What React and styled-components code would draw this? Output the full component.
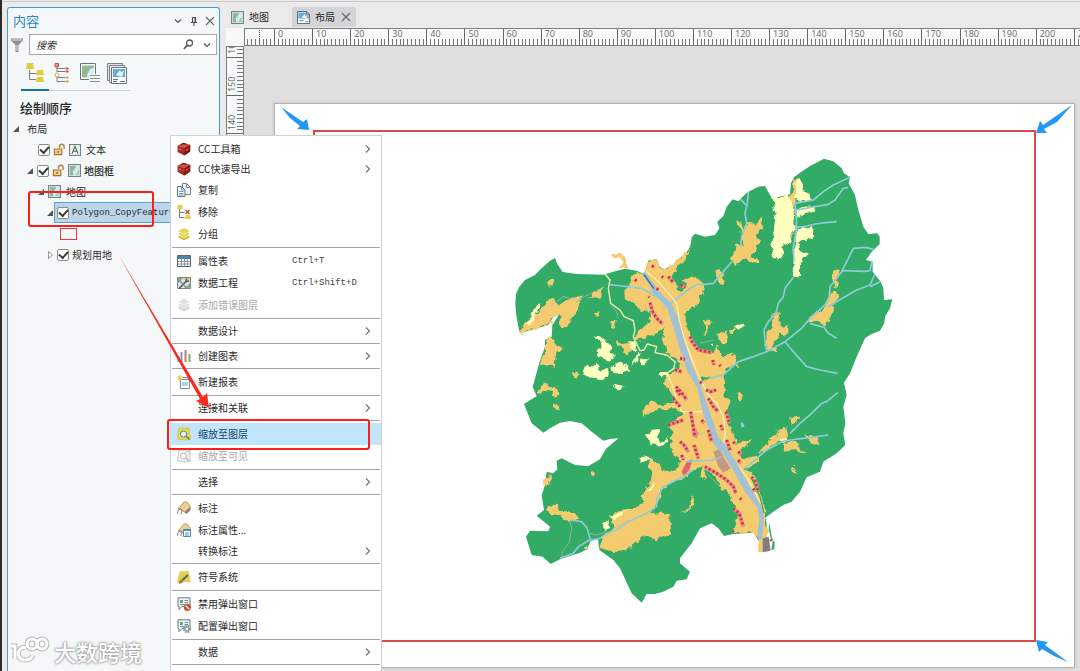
import React, { useEffect, useState } from 'react';
import styled, { createGlobalStyle } from 'styled-components';

const GlobalStyle = createGlobalStyle`
  * {
    box-sizing: border-box;
  }

  body {
    margin: 0;
    background: #eaeaea;
    color: #2a2a2a;
    font-family: 'Noto Sans CJK SC', sans-serif;
    font-size: 10px;
  }

  button, input {
    margin: 0;
    padding: 0;
    border: 0;
    background: none;
    color: inherit;
    font: inherit;
  }

  svg {
    display: block;
    flex: none;
  }
`;

const Shell = styled.div`
  position: relative;
  display: flex;
  flex-direction: column;
  min-height: 100vh;
  overflow: hidden;
  border-left: 2px solid #2d2a2c;
`;

const TopEdge = styled.div`
  height: 2px;
  border-bottom: 1px solid #c8cace;
`;

const Workspace = styled.div`
  flex: 1;
  display: flex;
  gap: 6px;
  padding-left: 5px;
`;

/* ---------- contents panel ---------- */

const Panel = styled.aside`
  flex: none;
  width: 213px;
  margin-top: 5px;
  border: 1px solid #4a98d0;
  border-bottom: 0;
  border-radius: 3px 3px 0 0;
  background: #f5f8f8;
`;

const PanelHeader = styled.header`
  display: flex;
  align-items: center;
  gap: 5px;
  height: 26px;
  padding: 0 4px 0 5px;
`;

const PanelTitle = styled.h1`
  flex: 1;
  margin: 0;
  color: #2a86c8;
  font-size: 13px;
  font-weight: 400;
  line-height: 26px;
`;

const IconButton = styled.button`
  display: flex;
  align-items: center;
  justify-content: center;
  width: 11px;
  height: 16px;
`;

const SearchRow = styled.form`
  display: flex;
  align-items: center;
  gap: 5px;
  padding: 0 2px;
`;

const SearchBox = styled.div`
  flex: 1;
  display: flex;
  align-items: center;
  gap: 7px;
  height: 21px;
  padding: 0 4px 0 6px;
  border: 1px solid #a5a7a8;
  background: #fff;
`;

const SearchInput = styled.input`
  flex: 1;
  min-width: 0;
  outline: 0;
  font-style: italic;

  &::placeholder {
    color: #333;
    opacity: 1;
  }
`;

const ViewBar = styled.div`
  display: flex;
  align-items: center;
  width: 110px;
  height: 36px;
  margin: 0 0 0 13px;
  border-bottom: 1px solid #cdd0d1;
`;

const ViewButton = styled.button`
  display: flex;
  align-items: center;
  justify-content: center;
  width: 28px;
  height: 36px;
  padding-top: 3px;
  border-bottom: 2px solid ${(p) => (p.$active ? '#1272b4' : 'transparent')};
`;

const SectionTitle = styled.h2`
  margin: 6px 0 0 12px;
  font-size: 13px;
  font-weight: 500;
  line-height: 21px;
`;

const Tree = styled.ul`
  margin: 0;
  padding: 0;
  list-style: none;
`;

const TreeRow = styled.li`
  display: flex;
  align-items: center;
  gap: 3px;
  height: 21px;
  padding-left: ${(p) => p.$indent}px;
  white-space: nowrap;
`;

const Expander = styled.button`
  display: flex;
  align-items: center;
  justify-content: center;
  width: 8px;
  height: 12px;
`;

const Selectable = styled.span`
  flex: 1;
  display: flex;
  align-items: center;
  gap: 3px;
  min-width: 0;
  height: 21px;
  margin-left: -3px;
  padding-left: 2px;
  border: 1px solid ${(p) => (p.$selected ? '#5b9fd3' : 'transparent')};
  background: ${(p) => (p.$selected ? '#bdd5e9' : 'none')};
`;

const Check = styled.input.attrs({ type: 'checkbox', defaultChecked: true })`
  appearance: none;
  flex: none;
  display: grid;
  place-items: center;
  width: 12px;
  height: 12px;
  border: 1px solid #8b8b8b;
  border-radius: 2px;
  background: #fff;

  &:checked::before {
    content: '';
    width: 7px;
    height: 4px;
    border: solid #3a3a3a;
    border-width: 0 0 2px 2px;
    transform: translateY(-1px) rotate(-48deg);
  }
`;

const RowLabel = styled.label`
  padding-left: ${(p) => (p.$spaced ? 2 : 0)}px;
  font-family: ${(p) => (p.$latin ? "'Liberation Mono', monospace" : 'inherit')};
  font-size: ${(p) => (p.$latin ? 9 : 10)}px;
  font-weight: ${(p) => (p.$bold ? 500 : 400)};
  line-height: 20px;
`;

const Swatch = styled.span`
  width: 17px;
  height: 12px;
  border: 1px solid #f0383c;
`;

/* ---------- document area ---------- */

const Documents = styled.main`
  flex: 1;
  min-width: 0;
  display: flex;
  flex-direction: column;
`;

const TabBar = styled.div`
  display: flex;
  gap: 18px;
  height: 26px;
  padding: 5px 0 1px;
`;

const Tab = styled.div`
  display: flex;
  align-items: center;
  gap: 5px;
  padding: 0 5px;
  border-radius: 3px 3px 0 0;
  background: ${(p) => (p.$active ? '#d2d4d7' : 'none')};
`;

const TabButton = styled.button`
  display: flex;
  align-items: center;
  gap: 5px;
  line-height: 20px;
`;

const RulerRow = styled.div`
  display: flex;
  height: 18px;
`;

const RulerCorner = styled.div`
  flex: none;
  width: 18px;
  background: #f7f9f9;
`;

const TopRuler = styled.svg`
  flex: 1;
  min-width: 0;
  width: 0;
  height: 18px;
  background: #fafcfc;
`;

const SideRuler = styled.svg`
  align-self: stretch;
  width: 18px;
  background: #f7fafa;
`;

const RulerText = styled.text`
  fill: #666;
  font-family: 'Open Sans', sans-serif;
  font-size: 9px;
`;

const Stage = styled.div`
  flex: 1;
  display: flex;
`;

const Canvas = styled.div`
  flex: 1;
  display: flex;
  padding: 57px 5px 4px 30px;
  background: #dfdfde;
`;

const Sheet = styled.div`
  flex: 1;
  display: flex;
  padding: 26px 38px 25px;
  border: 1px solid #b4b4b6;
  background: #fff;
  box-shadow: 0 0 3px #bcbcc0;
`;

const MapFrame = styled.div`
  position: relative;
  flex: 1;
  display: flex;
  border: 2px solid #d94a50;
`;

const MapDrawing = styled.svg`
  flex: 1;
  min-width: 0;
  width: 0;
  height: auto;
`;

const CornerArrow = styled.svg`
  position: absolute;
  top: ${(p) => p.$top};
  left: ${(p) => p.$left};
`;

/* ---------- context menu ---------- */

const Menu = styled.div`
  position: absolute;
  top: 135px;
  bottom: 0;
  left: 168px;
  width: 212px;
  padding-top: 3px;
  border: 1px solid #d0d2d3;
  border-bottom: 0;
  background: #fff;
`;

const MenuItem = styled.button`
  display: grid;
  grid-template-columns: 14px 87px 1fr 8px;
  align-items: center;
  gap: 7px;
  width: 100%;
  height: ${(p) => (p.$submenu ? 20 : 22)}px;
  padding: 0 9px 0 6px;
  background: ${(p) => (p.$highlight ? '#c1e5fa' : 'none')};
  color: ${(p) => (p.$highlight ? '#14466c' : 'inherit')};
  line-height: 20px;
  text-align: left;
  white-space: nowrap;

  &:disabled {
    color: #a9a9a9;
  }
`;

const Shortcut = styled.span`
  color: #444;
  font-family: 'Liberation Mono', monospace;
  font-size: 9px;
`;

const Divider = styled.hr`
  height: 1px;
  margin: 2px 1px;
  border: 0;
  background: #a3a3a3;
`;

/* ---------- overlays ---------- */

const Callout = styled.div`
  position: absolute;
  top: ${(p) => p.$top}px;
  left: ${(p) => p.$left}px;
  width: ${(p) => p.$width}px;
  height: ${(p) => p.$height}px;
  border: 2px solid #fa1f1a;
  border-radius: 3px;
  pointer-events: none;
`;

const Pointer = styled.svg`
  position: absolute;
  top: 250px;
  left: 113px;
  pointer-events: none;
`;

const Watermark = styled.div`
  position: absolute;
  bottom: 6px;
  left: 6px;
  display: flex;
  align-items: center;
  gap: 4px;
  color: #fff;
  font-size: 22px;
  font-weight: 500;
  line-height: 30px;
  text-shadow: 0 0 2px #999, 0 0 2px #999, 0 0 3px #aaa;
`;

/* ---------- icons ---------- */

const Icon = ({ size = 14, children }) => (
  <svg width={size} height={size} viewBox="0 0 14 14" fill="none" aria-hidden="true">
    {children}
  </svg>
);

const Chevron = ({ right }) => (
  <svg width="8" height="10" viewBox="0 0 8 10" fill="none" stroke={right ? '#777' : '#555'} aria-hidden="true">
    <path d={right ? 'M2 1.5 5.5 5 2 8.5' : 'M1 3.5 4 6.5 7 3.5'} strokeWidth="1.2" />
  </svg>
);

const CloseGlyph = () => (
  <svg width="10" height="10" viewBox="0 0 10 10" stroke="#666" strokeWidth="1.1" aria-hidden="true">
    <path d="M1 1 9 9M9 1 1 9" />
  </svg>
);

const ToolboxIcon = () => (
  <Icon>
    <path d="M0.5 4 6 .8 13.3 3 13.2 9.5 7.3 13.4.6 10z" fill="#a8271f" />
    <path d="M.5 4 6 .8 13.3 3 7.5 6.3z" fill="#cf5347" />
    <path d="M7.4 6.4v7l5.8-3.9V3z" fill="#7c1714" />
    <path d="M4 3.3C5 1 9 1.2 9.5 3.2" stroke="#441411" />
    <path d="M.7 6.5 7.3 9l5.8-3.4" stroke="#c9584c" strokeWidth=".6" />
    <path d="M3 6.6v1.5M10 7v1.5" stroke="#ddd" strokeWidth=".8" />
  </Icon>
);

const CopyIcon = () => (
  <Icon>
    <path d="M5.5 .5h4l4 4v7h-8z" fill="#eef4f8" stroke="#78838b" />
    <path d="M9.5 .5v4h4" stroke="#78838b" />
    <path d="M.5 3.5h4l3.500 3.500v6.500H.5z" fill="#f3f9fd" stroke="#5c7484" />
    <path d="M4.500 3.500v3.500H8M2 8.500h4.500M2 10.500h4.500M2 12h4.500" stroke="#4f9ccd" strokeWidth=".9" />
  </Icon>
);

const RemoveIcon = () => (
  <Icon>
    <path d="M1 0h4l1 4H0zM9 10h4l1 4H8z" fill="#e2cd3e" />
    <path d="M2.5 4v8.5h5M2.5 7.5h5" stroke="#7c8387" />
    <path d="m8.5 5 4 4M12.5 5l-4 4" stroke="#d6452b" strokeWidth="1.5" />
  </Icon>
);

const LayersIcon = ({ muted }) => (
  <Icon>
    <path d="M7 6.6 13.6 10 7 13.5.4 10z" fill={muted ? '#d6d6d6' : '#d5c139'} />
    <path d="M7 3.6 13.6 7 7 10.5.4 7z" fill={muted ? '#dedede' : '#e1cd45'} stroke="#fff" strokeWidth=".7" />
    <path d="M7 .6 13.6 4 7 7.5.4 4z" fill={muted ? '#e2e2e2' : '#e7d552'} stroke="#fff" strokeWidth=".7" />
  </Icon>
);

const TableIcon = () => (
  <Icon>
    <path d="M.5 1.5h13v11H.5z" fill="#fff" stroke="#5d666c" />
    <path d="M1 2h12v3H1z" fill="#3b85bd" />
    <path d="M1 7.5h12M1 10h12M4.5 2v10M7.5 2v10M10.5 2v10" stroke="#77818a" strokeWidth=".8" />
  </Icon>
);

const EngineeringIcon = () => (
  <Icon>
    <path d="M.5 1.5h13v11H.5z" fill="#d3e2ec" stroke="#7d8589" />
    <path d="M1 2h5L1 7zM8 12l5-5v5z" fill="#7fb27e" />
    <path d="m6 2 7 3V2z" fill="#e9cf4e" />
    <path d="m2 12.500 7-7M9 5.500l.5-3M9 5.500l3-.5" stroke="#555b60" strokeWidth="1.600" />
    <path d="m2 4 7.500 8" stroke="#858b8f" strokeWidth="1.300" />
  </Icon>
);

const ChartIcon = () => (
  <Icon>
    <path d="M1.5 7v6M4.5 3v10" stroke="#6ba6cf" strokeWidth="2" />
    <path d="M8.5 1v12" stroke="#d6735f" strokeWidth="2" />
    <path d="M12.5 5v8" stroke="#85a86d" strokeWidth="2" />
  </Icon>
);

const ReportIcon = () => (
  <Icon>
    <path d="M3.5 4.5h9v9h-9z" fill="#fff" stroke="#7c858b" />
    <path d="M5 7h6v4H5z" fill="#a8d1e9" />
    <path d="M6 2.5h5v2" stroke="#7c858b" />
    <path d="M3 0v6M0 3h6M1 1l4 4M5 1 1 5" stroke="#e1c43b" />
  </Icon>
);

const ZoomLayerIcon = ({ muted }) => (
  <Icon>
    <path d="M2 1h10l1.5 11-5 1L.5 12z" fill={muted ? '#f4f4f4' : '#e8d356'} stroke={muted ? '#c8c8c8' : '#d9c54a'} />
    <circle cx="6.5" cy="7" r="3" fill={muted ? '#fff' : '#e7f3fa'} stroke={muted ? '#bdbdbd' : '#4f84a8'} />
    <path d="m9 9 3.5 3.5" stroke={muted ? '#bdbdbd' : '#4f84a8'} strokeWidth="1.6" />
    {muted && <path d="m8 4 5-3v5" stroke="#c4c4c4" />}
  </Icon>
);

const LabelIcon = ({ form }) => (
  <Icon>
    <path d="M4 8.5 9.5 13 13.6 9V5.8L8 10z" fill="#8e8174" />
    <path d="M1.5 7.5 7 1h3l3.5 4.5L8 11z" fill="#ecce94" stroke="#a58d62" strokeWidth=".8" />
    <path d="M.5 12.5C.5 9 3 6.5 4.5 8.5S2.5 13 4.5 13" stroke="#7e7364" />
    {form && (
      <>
        <path d="M6.5 6.5h7v7h-7z" fill="#fff" stroke="#4f86ac" />
        <path d="M6.5 7.5h7M8 10h4M8 12h4" stroke="#4f94c4" />
      </>
    )}
  </Icon>
);

const SymbologyIcon = () => (
  <Icon>
    <path d="M2.5 1.500C5 .5 8 2 11.500 .5L13.700 12C11 13 8 11 4.500 13L0 12.500z" fill="#e5d04a" />
    <path d="m5 10.500 6-5.500" stroke="#5c6a73" strokeWidth="2" />
    <path d="M2 13.500c0-2 1.500-4 3-3S4.500 13.500 2 13.500" fill="#b9552e" />
  </Icon>
);

const PopupIcon = ({ gear }) => (
  <Icon>
    <path d="M1 .8h12v8.700H5L2 12.500V9.500H1z" fill="#f4f8fa" stroke="#6c757b" />
    <path d="M3 3h3v3H3z" fill="#69ab76" />
    <path d="M7.500 3.500H11M7.500 5.500H11M3 7.500h5" stroke="#4f94c4" />
    {gear ? (
      <>
        <circle cx="10" cy="10" r="3" fill="#fff" stroke="#8a8f92" strokeWidth="2" strokeDasharray="1.600 .8" />
        <circle cx="10" cy="10" r="2" stroke="#8a8f92" />
      </>
    ) : (
      <>
        <circle cx="10.300" cy="10.300" r="3.600" fill="#d14e2c" />
        <path d="m8.500 8.500 3.600 3.600" stroke="#fff" strokeWidth="1.200" />
      </>
    )}
  </Icon>
);

const MapIcon = () => (
  <Icon size={13}>
    <path d="M.6.6h12.800v12.800H.6z" fill="#d5ecf5" stroke="#7b8083" strokeWidth="1.200" />
    <path d="M2 2h7L7 6 5 8l1 4H2z" fill="#8dba91" />
    <path d="M12 12H8l2-4 2-2z" fill="#a9cfaa" />
  </Icon>
);

const LayoutIcon = () => (
  <Icon size={13}>
    <path d="M.6.6h9.400l3.400 3.400v9.400H.6z" fill="#fff" stroke="#657077" strokeWidth="1.200" />
    <path d="M1.500 1.500h8v3h3V8h-11z" fill="#64ade0" />
    <path d="M5 7 8 3.500 9 5l2-.500L10 8z" fill="#e6f4fc" />
    <path d="M2.500 10.500H7M9 11.500h3" stroke="#3f86b8" />
    <path d="M10 .6V4h3.400" stroke="#657077" />
  </Icon>
);

const LockIcon = () => (
  <Icon size={13}>
    <path d="M1.500 6.500h8v6h-8z" fill="#f0cf97" stroke="#a8702e" strokeWidth="1.200" />
    <path d="M7 6V4c0-3.500 5-3.500 5 0v2.500" stroke="#b98442" strokeWidth="1.500" />
    <path d="M5.500 8.500v2" stroke="#70451b" strokeWidth="1.400" />
  </Icon>
);

const TextFrameIcon = () => (
  <Icon size={12}>
    <path d="M.6.6h12.800v12.800H.6z" fill="#e8f0eb" stroke="#777d7f" strokeWidth="1.200" />
    <path d="m3.500 11.500 3.500-9 3.500 9M4.800 8.500h4.400" stroke="#4b5e55" strokeWidth="1.200" />
  </Icon>
);

const DrawOrderIcon = () => (
  <svg width="20" height="20" viewBox="0 0 20 20" fill="none" aria-hidden="true">
    <path d="M2 0h6l1 6H1zM12 7h6l1 5h-8zM12 14h6l1 5h-8z" fill="#e2cd3c" />
    <path d="M4.500 7v9.500H11M4.500 10.500H11" stroke="#7c8489" />
  </svg>
);

const SourceIcon = () => (
  <svg width="16" height="20" viewBox="0 0 16 20" fill="none" aria-hidden="true">
    <path d="M1 .5h3.500V4H1z" fill="#e89a80" stroke="#cd5236" />
    <path d="M3 4v5M3 8.500h8M3 5.500h8M3 14v4.500h8M3 14.500h8" stroke="#777e83" />
    <path d="M11.500 5.500h3M11.500 8.500h3" stroke="#cd5236" strokeWidth="2" />
    <circle cx="3" cy="12" r="2" fill="#fff" stroke="#d6a041" />
    <path d="M11.500 14.500h3M11.500 18.500h3" stroke="#d6a041" strokeWidth="2" />
  </svg>
);

const SelectionIcon = () => (
  <svg width="21" height="20" viewBox="0 0 21 20" fill="none" aria-hidden="true">
    <path d="M1.500 .5h15v16h-15z" fill="#fff" stroke="#6d7377" />
    <path d="M3 2.500h12v12H3z" fill="#8dba92" />
    <path d="m8 12 3-6 4-1.500v10H8z" fill="#d8eff8" />
    <path d="M10 11h11v9H10z" fill="#f5f8f8" />
    <path d="M11 12.500h10M11 15.500h10M11 18.500h10" stroke="#858b8e" />
  </svg>
);

const MapSeriesIcon = () => (
  <svg width="21" height="21" viewBox="0 0 21 21" fill="none" aria-hidden="true">
    <path d="M.5.5h15v17H.500z" fill="#dde2e5" stroke="#7c8488" />
    <path d="M2.500 2.500h15v17h-15z" fill="#e8edf0" stroke="#7c8488" />
    <path d="M4.500 4.500h15v16h-15z" fill="#fff" stroke="#69737a" />
    <path d="M6 6h12v8H6z" fill="#63ace0" />
    <path d="m9 12 4-5 1 2 3-1-2 6z" fill="#e6f4fc" />
    <path d="M6 16.500h5M6 18.500h4M13 18.500h5" stroke="#5a7689" />
  </svg>
);

/* ---------- menu data ---------- */

const menuGroups = [
  [
    { label: 'CC工具箱', icon: <ToolboxIcon />, submenu: true },
    { label: 'CC快速导出', icon: <ToolboxIcon />, submenu: true },
    { label: '复制', icon: <CopyIcon /> },
    { label: '移除', icon: <RemoveIcon /> },
    { label: '分组', icon: <LayersIcon /> },
  ],
  [
    { label: '属性表', icon: <TableIcon />, shortcut: 'Ctrl+T' },
    { label: '数据工程', icon: <EngineeringIcon />, shortcut: 'Ctrl+Shift+D' },
    { label: '添加错误图层', icon: <LayersIcon muted />, disabled: true },
  ],
  [{ label: '数据设计', submenu: true }],
  [{ label: '创建图表', icon: <ChartIcon />, submenu: true }],
  [{ label: '新建报表', icon: <ReportIcon /> }],
  [{ label: '连接和关联', submenu: true }],
  [
    { label: '缩放至图层', icon: <ZoomLayerIcon />, highlight: true },
    { label: '缩放至可见', icon: <ZoomLayerIcon muted />, disabled: true },
  ],
  [{ label: '选择', submenu: true }],
  [
    { label: '标注', icon: <LabelIcon /> },
    { label: '标注属性...', icon: <LabelIcon form /> },
    { label: '转换标注', submenu: true },
  ],
  [{ label: '符号系统', icon: <SymbologyIcon /> }],
  [
    { label: '禁用弹出窗口', icon: <PopupIcon /> },
    { label: '配置弹出窗口', icon: <PopupIcon gear /> },
  ],
  [{ label: '数据', submenu: true }],
];

const ContextMenu = () => (
  <Menu role="menu">
    {menuGroups.map((group) => (
      <React.Fragment key={group[0].label}>
        {group.map((item) => (
          <MenuItem
            key={item.label}
            type="button"
            role="menuitem"
            disabled={item.disabled}
            $submenu={item.submenu}
            $highlight={item.highlight}
          >
            <span>{item.icon}</span>
            <span>{item.label}</span>
            <Shortcut>{item.shortcut}</Shortcut>
            {item.submenu && <Chevron right />}
          </MenuItem>
        ))}
        <Divider />
      </React.Fragment>
    ))}
  </Menu>
);

/* ---------- rulers ---------- */

const STEP = 38.085;

const useWindowWidth = () => {
  const [width, setWidth] = useState(window.innerWidth);
  useEffect(() => {
    const onResize = () => setWidth(window.innerWidth);
    window.addEventListener('resize', onResize);
    return () => window.removeEventListener('resize', onResize);
  }, []);
  return width;
};

const HorizontalRuler = () => {
  const count = Math.ceil((useWindowWidth() - 274) / STEP);
  const majors = Array.from({ length: count }, (_, i) => i);
  const minors = Array.from({ length: count * 10 + 8 }, (_, i) => i - 8);
  return (
    <TopRuler shapeRendering="crispEdges">
      {minors.map((i) => (
        <path key={i} d={`M${30.5 + (i * STEP) / 10} 11v6`} stroke="#777" />
      ))}
      <path d="M15 2v14" stroke="#555" strokeDasharray="1 1" />
      {majors.map((i) => (
        <g key={i}>
          <path d={`M${30.5 + i * STEP} 0v18`} stroke="#666" />
          <RulerText x={34 + i * STEP} y="9">{i * 10}</RulerText>
        </g>
      ))}
      <path d="M0 .5h3000M0 17.500h3000M.5 0v18" stroke="#7d7d7d" />
    </TopRuler>
  );
};

const VerticalRuler = () => {
  const majors = Array.from({ length: 17 }, (_, i) => i);
  const minors = Array.from({ length: 170 }, (_, i) => i - 3);
  return (
    <SideRuler shapeRendering="crispEdges">
      {minors.map((i) => (
        <path key={i} d={`M11 ${11.5 + (i * STEP) / 10}h6`} stroke="#777" />
      ))}
      {majors.map((i) => (
        <g key={i}>
          <path d={`M0 ${11.5 + i * STEP}h18`} stroke="#666" />
          <RulerText transform={`translate(9 ${8 + i * STEP}) rotate(-90)`}>{160 - i * 10}</RulerText>
        </g>
      ))}
      <path d="M.5 0v3000M17.500 0v3000M0 .5h18" stroke="#7d7d7d" />
    </SideRuler>
  );
};

/* ---------- land use map ---------- */

const GREEN = '#32ab67';
const GOLD = '#f5cb70';
const PALE = '#ffffbe';
const STREAM = '#8fcbd8';

const outline =
  'M46 490 48 462 58 440 75 420 105 405 125 385 150 362 165 354 172 372 188 396 230 402 310 404 345 394 375 386 410 392 432 402 438 385 445 362 470 357 478 380 492 388 520 376 545 350 565 330 572 312 575 292 585 281 615 290 645 285 658 265 652 245 670 228 680 200 698 178 715 184 740 158 775 140 795 138 810 165 818 175 870 163 873 130 882 112 900 98 930 78 955 65 972 56 1000 64 1025 85 1032 100 1050 112 1046 130 1065 165 1075 210 1090 260 1105 282 1132 280 1139 290 1139 312 1115 335 1098 360 1118 365 1118 395 1142 425 1150 445 1152 480 1177 478 1170 505 1155 530 1153 550 1140 572 1115 582 1095 595 1070 650 1050 700 1032 728 1040 765 1030 800 1036 850 1030 880 1036 915 1010 940 970 965 960 995 920 1012 900 1055 875 1085 850 1095 820 1115 798 1132 802 1180 778 1205 760 1178 700 1182 672 1188 655 1165 635 1150 600 1165 575 1210 540 1255 540 1270 570 1295 560 1318 530 1322 520 1340 490 1355 465 1362 440 1362 425 1388 395 1360 360 1285 340 1260 298 1230 294 1198 272 1202 262 1228 240 1238 180 1258 152 1272 128 1250 95 1245 78 1190 90 1172 145 1174 150 1160 110 1127 132 1110 125 1065 135 1035 140 995 160 1000 172 988 170 962 185 955 225 975 265 978 300 958 318 926 335 912 355 895 330 897 310 902 275 875 245 850 210 843 180 848 150 865 130 878 95 850 72 792 110 768 98 742 112 690 118 668 135 620 135 600 155 590 157 555 178 523 160 530 145 555 60 580 55 560 48 520z';

const town =
  'M432 402 412 398 398 405 392 430 370 455 372 478 400 488 425 515 455 510 445 543 415 570 408 600 440 592 470 582 497 560 485 600 500 620 497 640 530 650 545 675 520 692 488 725 505 750 525 785 485 792 455 784 430 805 432 827 470 808 530 808 548 825 500 855 520 880 510 920 525 950 545 965 520 995 495 992 470 965 445 955 455 1010 430 1060 425 1095 395 1110 370 1105 330 1130 345 1165 305 1195 298 1230 340 1236 380 1228 420 1200 435 1185 470 1198 510 1185 508 1130 485 1115 450 1120 475 1085 490 1045 540 1020 560 1010 580 985 610 980 645 1010 655 1035 690 1060 700 1090 715 1120 700 1178 760 1178 780 1200 775 1237 810 1237 805 1190 795 1135 785 1070 765 1010 735 985 778 965 772 945 730 952 720 930 745 915 755 900 710 912 700 880 685 850 680 810 695 780 670 765 675 690 700 675 718 690 700 640 670 655 655 615 640 640 590 630 570 590 560 560 555 520 570 500 590 500 605 460 615 435 590 412 560 415 530 440 515 410 530 380 560 355 575 310 565 330 520 376 492 388 478 380 470 357 445 362 438 385z';

const goldPatches = [
  // north-west
  'M330 346 362 338 380 360 386 384 355 388 368 370 360 352 332 352z',
  'M147 418 165 415 160 432 155 440 148 430z',
  'M60 565 85 545 120 515 145 480 165 475 175 495 200 480 215 468 248 470 232 490 235 512 212 540 205 560 182 565 178 525 160 530 145 555 62 580z',
  'M262 470 280 455 305 447 308 465 300 478 280 470z',
  'M292 510 298 515 294 532 285 525z',
  'M330 545 350 542 345 565 332 560z',
  'M157 590 165 612 190 625 185 634 168 632 163 655 168 680 118 668 135 640 135 602z',
  'M345 600 370 608 392 605 395 635 378 648 365 620z',
  'M215 698 236 695 238 708 218 712z',
  'M110 755 135 730 145 745 172 740 175 765 155 770 160 755 130 752 112 765z',
  'M155 800 168 790 178 805 165 810z',
  // south-west
  'M132 1020 148 1000 150 1015 142 1035 134 1030z',
  'M270 992 288 1000 283 1012 275 1010z',
  'M135 1105 165 1093 180 1107 225 1120 232 1140 205 1145 175 1125 150 1122z',
  'M250 1225 268 1212 262 1230 248 1232z',
  'M545 1118 568 1098 580 1062 582 1085 570 1108z',
  'M608 980 618 985 612 1020 602 1008z',
  // north-east
  'M708 238 722 245 730 268 745 246 763 248 768 262 780 235 785 228 790 240 785 260 770 290 780 300 772 325 755 345 778 365 760 370 735 352 715 370 705 382 695 355 712 310 728 322 722 275z',
  'M655 380 665 388 665 410 678 425 660 430 650 415z',
  'M880 118 895 115 897 150 888 170 885 200 870 205 868 175 878 155z',
  'M995 400 1005 392 1018 398 1012 420 1012 440 1002 445z',
  'M928 545 935 525 975 500 985 480 1000 455 1015 458 1018 475 1000 490 998 515 975 560 955 550z',
  'M798 610 800 575 815 560 822 515 842 518 835 535 845 560 862 555 862 585 845 588 840 572 828 595 815 625 835 628 830 640 800 628z',
  'M615 540 632 545 618 583 610 585 616 565z',
  'M655 578 678 575 685 600 670 615 655 600z',
  'M690 572 708 558 710 568 694 586z',
  // east
  'M715 755 728 757 735 778 715 785z',
  'M770 945 820 890 835 880 825 875 845 872 862 862 865 880 860 895 830 905 790 935z',
  'M870 832 890 832 895 842 875 850z',
  'M848 915 880 905 900 925 918 935 915 940 880 928 855 932z',
  'M910 888 935 885 955 900 955 915 940 908z',
  'M876 968 885 970 882 978z',
  'M877 985 884 985 890 1003 880 998z',
];

const greenHoles = [
  'M532 425 548 420 560 432 555 450 540 452 530 440z',
  'M600 715 620 708 632 712 610 725z',
];

const palePatches = [
  'M80 555 95 520 105 495 118 490 122 505 108 520 98 550z',
  'M280 588 300 586 315 600 330 615 342 655 325 665 292 640 290 630 305 622 300 600 282 598z',
  'M258 672 272 682 290 672 300 678 292 690 325 688 322 700 318 715 290 722 278 710 250 708 252 690z',
  'M345 672 365 668 382 678 380 695 362 705 345 700 330 688z',
  'M338 735 375 740 360 750 345 750z',
  'M385 612 405 608 415 630 395 630z',
  'M418 660 445 655 445 668 422 670z',
  'M392 678 410 640 420 636 412 660z',
  'M818 175 866 163 880 205 885 265 870 305 848 320 845 345 848 355 820 355 815 330 825 240z',
  'M890 120 900 113 910 130 908 150 925 160 930 180 900 190 888 170z',
  'M885 215 915 200 950 198 945 215 910 220 888 232z',
  'M890 270 940 262 938 298 915 300 895 310 905 335 925 340 900 375 900 410 885 412 875 405 882 380 878 340 885 310z',
  'M708 555 725 545 732 555 715 570z',
  'M442 885 465 865 485 870 472 885 480 910 505 895 495 915 475 920 460 910 448 912z',
  'M418 950 440 945 448 960 425 968z',
  'M310 1145 325 1142 330 1165 310 1168z',
  'M335 1130 378 1108 360 1128 338 1140z',
  'M442 1050 462 1030 468 1034 446 1056z',
  'M475 700 500 695 510 708 485 712z',
  'M840 895 862 898 855 910 840 905z',
  'M630 610 640 605 638 620z',
];

const streams = [
  'M330 434 365 438 400 442 425 445 470 470',
  'M600 430 570 445 545 465 490 505',
  'M745 155 742 190 735 220 740 250 725 290 722 320 M722 178 742 200',
  'M700 360 665 400 640 430 600 435',
  'M1050 112 1000 135 970 155 940 180 885 190 890 230 888 280 880 320 882 365',
  'M1045 142 1030 145 1005 180 985 193 945 200 890 210',
  'M890 262 920 258 945 252 985 247 1010 245',
  'M880 412 855 445 850 470 835 490 828 520 805 545 792 570 795 600 800 635',
  'M1120 328 1098 322 1060 325 1030 385 1025 395 990 440 988 470 975 495 935 530 905 565 855 605 800 635 760 650 715 665 670 705 630 715',
  'M1025 392 1095 394 1110 392 1116 365',
  'M1125 402 1110 435 1070 450 1035 470 985 500 M1110 440 1140 425',
  'M930 550 972 562 985 580 1010 595',
  'M855 605 880 635 920 680 960 690 1013 700',
  'M1013 758 980 785 965 790 935 820 900 850 870 880 M985 885 950 890 910 895 870 900 845 905 800 930 770 955 735 985',
  'M560 965 640 960 665 950',
  'M580 990 545 1012 490 1040 470 1075 470 1100 430 1125 385 1145 350 1170 320 1180 300 1195 275 1200',
  'M210 1140 245 1145 262 1165 268 1190 272 1198 235 1220 220 1240 180 1255',
];

const greyPaths = [
  'M150 500 190 470 230 480 285 455 312 440',
  'M210 1145 215 1165 208 1205 185 1240 188 1255',
  'M270 1180 290 1185 320 1175 M340 1165 385 1140',
  'M330 490 350 515 355 535',
  'M600 610 640 600 M585 890 630 870 M620 1000 660 1040',
  'M430 395 470 470 520 500 555 590',
];

const paleRoads = [
  'M315 402 330 420 325 445 332 490 360 510 372 530 400 542 405 570 400 590 420 632 432 630 442 612 470 620 465 638 500 645 525 665 522 685 500 700 515 730 530 780 545 815 608 815',
  'M432 388 480 430 530 490 540 550 560 615 580 670 600 715 625 765 650 790 670 830 676 880 670 910',
  'M645 895 660 930 700 960 740 1010 782 1090',
];

const houses = [
  'M450 488 458 515 470 535 488 552',
  'M505 410 520 428 M542 435 556 442 M455 378 464 380 M485 410 490 412 M470 445 475 450 M405 418 410 424 M446 470 448 472',
  'M570 590 578 608 595 630 635 638',
  'M638 660 642 675 M658 675 662 678',
  'M525 690 545 695 M540 655 555 658',
  'M528 740 545 758 560 780 M530 750 540 765',
  'M520 775 540 800 M505 855 550 840 M572 815 578 850 585 890',
  'M540 905 552 915 565 935 M545 945 550 960 M582 915 595 955',
  'M618 750 632 755 648 750 M625 775 640 800 655 815 M662 855 668 870 M678 815 688 850',
  'M625 870 635 905 M605 840 612 850 M600 725 606 730',
  'M680 900 690 930 M700 905 705 912 M715 935 725 945 M715 960 722 970',
  'M615 980 650 1000 680 1020 700 1040 708 1060',
  'M700 1105 718 1120 730 1160 M720 1075 724 1078',
  'M755 1010 768 1030 775 1055 M760 1045 765 1055',
  'M812 1198 815 1202 M698 1174 702 1176',
];

const LandUseMap = () => (
  <MapDrawing viewBox="315 132 719 508" role="img" aria-label="规划用地">
    <defs>
      <filter id="ragged" x="-2%" y="-2%" width="104%" height="104%">
        <feTurbulence type="fractalNoise" baseFrequency=".05" numOctaves="2" seed="4" />
        <feDisplacementMap in="SourceGraphic" scale="22" xChannelSelector="R" yChannelSelector="G" />
      </filter>
    </defs>
    <g transform="translate(500 140) scale(.33333)" fill="none" strokeLinejoin="round">
      <path d={outline} fill={GREEN} />
      <g filter="url(#ragged)">
        <path d={town} fill={GOLD} />
        {goldPatches.map((d) => <path key={d} d={d} fill={GOLD} />)}
        {greenHoles.map((d) => <path key={d} d={d} fill={GREEN} />)}
        {palePatches.map((d) => <path key={d} d={d} fill={PALE} />)}
      </g>
      <path d="M640 935 662 925 670 950 692 985 670 998 655 980z" fill="#c49a86" />
      <path d="M545 995 560 965 578 958 568 990 552 1010z" fill="#e0656c" />
      <path d="M575 870 588 865 596 880 590 895 578 890z" fill="#e58589" />
      {greyPaths.map((d) => <path key={d} d={d} stroke="#b5beb0" strokeWidth="2" />)}
      {streams.map((d) => <path key={d} d={d} stroke={STREAM} strokeWidth="5" />)}
      {paleRoads.map((d) => <path key={d} d={d} stroke="#f6f2b0" strokeWidth="4" />)}
      <path
        d="M426 402 436 398 492 470 515 492 535 540 555 610 578 680 600 730 625 805 655 890 680 920 708 965 750 1040 782 1095 792 1130 788 1180 786 1200 776 1205 772 1180 778 1140 772 1105 735 1055 690 975 660 925 638 900 612 830 592 745 560 690 540 630 520 560 500 502 470 470z"
        fill="#a3c1d4"
      />
      <path d="M432 404 462 446" stroke="#3f6b78" strokeWidth="4" />
      <path d="M455 450 505 495M640 905 665 935" stroke="#86c7e2" strokeWidth="6" />
      {houses.map((d) => (
        <g key={d}>
          <path d={d} stroke="#e58b86" strokeWidth="11" />
          <path d={d} stroke="#d42c46" strokeWidth="8" strokeDasharray="6 7" />
        </g>
      ))}
      <path d="M776 1200 788 1195 788 1236 775 1236z" fill={GOLD} />
      <path d="M788 1195 806 1190 812 1232 788 1236z" fill="#807f80" />
      <path d="M808 1148 806 1165 812 1195 824 1205 823 1228 814 1230 818 1205z" fill={GREEN} />
      <path d="M755 1015 780 1070 792 1120" stroke={GREEN} strokeWidth="4" />
      <path d="M722 845 730 850 734 860 724 862z" fill="#8fd3d8" />
    </g>
  </MapDrawing>
);

const BlueArrow = ({ top, left, width, height, d }) => (
  <CornerArrow $top={top} $left={left} width={width} height={height} aria-hidden="true">
    <path d={d} fill="#2496f5" />
  </CornerArrow>
);

/* ---------- page ---------- */

const OpenTriangle = () => (
  <svg width="6" height="6" viewBox="0 0 6 6" aria-hidden="true">
    <path d="M6 0v6H0z" fill="#555" />
  </svg>
);

const ClosedTriangle = () => (
  <svg width="5" height="8" viewBox="0 0 5 8" fill="none" aria-hidden="true">
    <path d="M.5.5v7l4-3.500z" stroke="#999" />
  </svg>
);

const ContentsPanel = () => (
  <Panel>
    <PanelHeader>
      <PanelTitle>内容</PanelTitle>
      <IconButton type="button" aria-label="选项"><Chevron /></IconButton>
      <IconButton type="button" aria-label="固定">
        <svg width="8" height="10" viewBox="0 0 8 10" fill="none" stroke="#444" aria-hidden="true">
          <path d="M2.500 6V1.500h3V6M1 6.500h6M4 6.500V10M5 1v5" />
        </svg>
      </IconButton>
      <IconButton type="button" aria-label="关闭"><CloseGlyph /></IconButton>
    </PanelHeader>

    <SearchRow>
      <svg width="14" height="16" viewBox="0 0 14 16" aria-hidden="true">
        <path d="M1 1.500h12v2L8.500 8v7h-3V8L1 3.500z" fill="#8b8f92" />
        <path d="M2 3h10M7 8v6" stroke="#e4e6e7" />
      </svg>
      <SearchBox>
        <SearchInput type="text" placeholder="搜索" aria-label="搜索" />
        <IconButton type="submit" aria-label="查找">
          <svg width="11" height="11" viewBox="0 0 11 11" fill="none" stroke="#555" aria-hidden="true">
            <circle cx="6.500" cy="4" r="3" strokeWidth="1.300" />
            <path d="M4.300 6.300.8 10" strokeWidth="1.700" />
          </svg>
        </IconButton>
        <IconButton type="button" aria-label="搜索选项"><Chevron /></IconButton>
      </SearchBox>
    </SearchRow>

    <ViewBar>
      <ViewButton type="button" aria-label="按绘制顺序列出" $active><DrawOrderIcon /></ViewButton>
      <ViewButton type="button" aria-label="按元素类型列出"><SourceIcon /></ViewButton>
      <ViewButton type="button" aria-label="按地图框列出"><SelectionIcon /></ViewButton>
      <ViewButton type="button" aria-label="地图系列"><MapSeriesIcon /></ViewButton>
    </ViewBar>

    <SectionTitle>绘制顺序</SectionTitle>
    <Tree>
      <TreeRow $indent={4}>
        <Expander type="button" aria-label="折叠布局"><OpenTriangle /></Expander>
        <RowLabel as="span" $spaced>&nbsp;布局</RowLabel>
      </TreeRow>
      <TreeRow $indent={30}>
        <Check id="text" />
        <LockIcon />
        <TextFrameIcon />
        <RowLabel htmlFor="text" $spaced>文本</RowLabel>
      </TreeRow>
      <TreeRow $indent={18}>
        <Expander type="button" aria-label="折叠地图框"><OpenTriangle /></Expander>
        <Check id="mapframe" />
        <LockIcon />
        <MapIcon />
        <RowLabel htmlFor="mapframe" $bold>地图框</RowLabel>
      </TreeRow>
      <TreeRow $indent={29}>
        <Expander type="button" aria-label="折叠地图"><OpenTriangle /></Expander>
        <MapIcon />
        <RowLabel as="span" $spaced>地图</RowLabel>
      </TreeRow>
      <TreeRow $indent={38}>
        <Expander type="button" aria-label="折叠图层"><OpenTriangle /></Expander>
        <Selectable $selected>
          <Check id="polygon" />
          <RowLabel htmlFor="polygon" $latin>Polygon_CopyFeatures</RowLabel>
        </Selectable>
      </TreeRow>
      <TreeRow $indent={52}><Swatch /></TreeRow>
      <TreeRow $indent={38}>
        <Expander type="button" aria-label="展开规划用地"><ClosedTriangle /></Expander>
        <Selectable>
          <Check id="landuse" />
          <RowLabel htmlFor="landuse">规划用地</RowLabel>
        </Selectable>
      </TreeRow>
    </Tree>
  </Panel>
);

const App = () => {
  return (
    <>
      <GlobalStyle />
      <Shell>
        <TopEdge />
        <Workspace>
          <ContentsPanel />
          <Documents>
            <TabBar>
              <Tab>
                <TabButton type="button"><MapIcon />地图</TabButton>
              </Tab>
              <Tab $active>
                <TabButton type="button"><LayoutIcon />布局</TabButton>
                <IconButton type="button" aria-label="关闭布局"><CloseGlyph /></IconButton>
              </Tab>
            </TabBar>
            <RulerRow>
              <RulerCorner />
              <HorizontalRuler />
            </RulerRow>
            <Stage>
              <VerticalRuler />
              <Canvas>
                <Sheet>
                  <MapFrame>
                    <LandUseMap />
                    <BlueArrow top="-25px" left="-34px" width="32" height="26" d="M0 0 22 15 26 12 28 23 16 22 19 19 9 11z" />
                    <BlueArrow top="-27px" left="100%" width="40" height="32" d="M38 0 23 17 10 24 13 28 2 28 6 16 9 20z" />
                    <BlueArrow top="calc(100% - 3px)" left="100%" width="36" height="26" d="M34 25 20 19 8 12 5 15 2 3 14 5 11 8z" />
                  </MapFrame>
                </Sheet>
              </Canvas>
            </Stage>
          </Documents>
        </Workspace>

        <ContextMenu />

        <Callout $top={191} $left={26} $width={126} $height={36} />
        <Callout $top={419} $left={165} $width={203} $height={31} />
        <Pointer width="100" height="162" aria-hidden="true">
          <path d="M3 4 88 147 92 143 94 158 81 151 85 149z" fill="#fa2a1e" />
        </Pointer>

        <Watermark>
          <svg width="42" height="30" viewBox="0 0 42 30" fill="none" aria-hidden="true">
            <g stroke="#b4b6b6" strokeWidth="5">
              <path d="M3 10h4v13M18 12c-9-3-11 12-1 12 5 0 7-2 8-5" />
              <circle cx="24" cy="8" r="5" />
              <circle cx="34" cy="8" r="5" />
            </g>
            <g stroke="#fff" strokeWidth="3">
              <path d="M3 10h4v13M18 12c-9-3-11 12-1 12 5 0 7-2 8-5" />
              <circle cx="24" cy="8" r="5" />
              <circle cx="34" cy="8" r="5" />
            </g>
          </svg>
          大数跨境
        </Watermark>
      </Shell>
    </>
  );
};

export default App;
